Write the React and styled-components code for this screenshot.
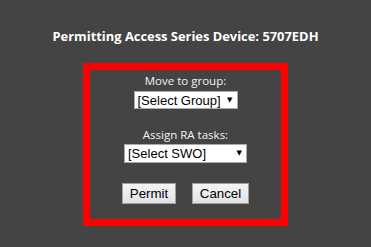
import React, { useState } from "react";
import styled, { createGlobalStyle } from "styled-components";

const GlobalStyle = createGlobalStyle`
  html, body {
    margin: 0;
    padding: 0;
    background: #444444;
  }
`;

const Page = styled.div`
  min-height: 247px;
  display: flex;
  flex-direction: column;
  align-items: center;
  background: #444444;
  font-family: "Open Sans", "DejaVu Sans", sans-serif;
`;

const Title = styled.div`
  margin-top: 28px;
  height: 16px;
  line-height: 16px;
  font-size: 12.9px;
  font-weight: bold;
  color: #ffffff;
`;

const Panel = styled.div`
  margin-top: 19px;
  width: 205px;
  height: 163px;
  box-sizing: border-box;
  border: 7px solid #ff0000;
  display: flex;
  flex-direction: column;
  align-items: center;
  padding-top: 3px;
`;

const Label = styled.div`
  font-size: 11.5px;
  line-height: 15px;
  color: #f2f2f2;
`;

const SelectBox = styled.div`
  margin-top: ${(p) => p.$gap}px;
  width: ${(p) => p.$width}px;
  height: ${(p) => p.$height}px;
  box-sizing: border-box;
  border: 1px solid #a9a9a9;
  background: #ffffff;
  display: flex;
  align-items: center;
  justify-content: space-between;
  padding: 0 4px 0 3px;
  font-family: "Liberation Sans", Arial, sans-serif;
  font-size: 13px;
  white-space: nowrap;
  color: #000000;
  cursor: default;
`;

const Arrow = styled.span`
  font-family: "DejaVu Sans", sans-serif;
  font-size: 7px;
  line-height: 1;
`;

const Spacer = styled.div`
  height: ${(p) => p.$h}px;
`;

const ButtonRow = styled.div`
  display: flex;
  gap: 16px;
`;

const Button = styled.button`
  height: 21px;
  width: ${(p) => p.$width}px;
  box-sizing: border-box;
  padding: 0;
  border: 1px solid #a0a0a0;
  border-radius: 0;
  background: linear-gradient(#f4f4f4, #e2e2e2);
  font-family: "Liberation Sans", Arial, sans-serif;
  font-size: 13.3px;
  color: #000000;
  cursor: pointer;
`;

export default function App() {
  const [group] = useState("[Select Group]");
  const [swo] = useState("[Select SWO]");

  return (
    <>
      <GlobalStyle />
      <Page>
        <Title>Permitting Access Series Device: 5707EDH</Title>
        <Panel>
          <Label>Move to group:</Label>
          <SelectBox $gap={3} $width={104} $height={18}>
            <span>{group}</span>
            <Arrow>▼</Arrow>
          </SelectBox>
          <Spacer $h={18} />
          <Label>Assign RA tasks:</Label>
          <SelectBox $gap={2} $width={123} $height={19}>
            <span>{swo}</span>
            <Arrow>▼</Arrow>
          </SelectBox>
          <Spacer $h={20} />
          <ButtonRow>
            <Button $width={54}>Permit</Button>
            <Button $width={57}>Cancel</Button>
          </ButtonRow>
        </Panel>
      </Page>
    </>
  );
}
